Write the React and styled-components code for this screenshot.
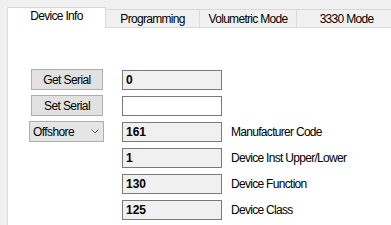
import React from 'react';
import styled, { createGlobalStyle } from 'styled-components';

const GlobalStyle = createGlobalStyle`
  html, body {
    margin: 0;
    padding: 0;
    background: #f0f0f0;
  }
  body {
    font-family: "Liberation Sans", Arial, sans-serif;
    color: #000;
  }
`;

const Window = styled.div`
  width: 391px;
  height: 225px;
  overflow: hidden;
  background: #f0f0f0;
  padding: 7px 0 0 7px;
  box-sizing: border-box;
  display: flex;
  flex-direction: column;
`;

const TabStrip = styled.div`
  display: flex;
  align-items: flex-end;
  height: 21px;
  flex-shrink: 0;
`;

const Tab = styled.div`
  box-sizing: border-box;
  width: ${({ $w }) => $w}px;
  flex-shrink: 0;
  font-size: 12px;
  letter-spacing: -0.7px;
  text-align: center;
  white-space: nowrap;
  border: 1px solid #d9d9d9;
  ${({ $active }) => ($active
    ? `
    height: 21px;
    background: #fff;
    border-bottom: none;
    line-height: 17px;
  `
    : `
    height: 19px;
    background: #f0f0f0;
    border-left: none;
    line-height: 17px;
    padding-top: 1px;
  `)}
`;

const Panel = styled.div`
  flex: 1;
  background: #fff;
  border-left: 1px solid #d9d9d9;
  padding: 41px 0 0 21px;
  display: flex;
  flex-direction: column;
  gap: 5px;
`;

const Row = styled.div`
  display: flex;
  align-items: flex-end;
  height: 21px;
`;

const LeftCell = styled.div`
  width: 75px;
  flex-shrink: 0;
  margin-right: 18px;
  display: flex;
  justify-content: flex-end;
  padding-right: 1px;
  box-sizing: border-box;
`;

const Button = styled.button`
  box-sizing: border-box;
  width: 72px;
  height: 21px;
  margin: 0;
  padding: 0;
  background: #e1e1e1;
  border: 1px solid #adadad;
  font-family: "Liberation Sans", Arial, sans-serif;
  font-size: 12px;
  letter-spacing: -0.6px;
  color: #000;
`;

const Combo = styled.div`
  box-sizing: border-box;
  width: 75px;
  height: 21px;
  margin-right: -1px;
  background: #e5e5e5;
  border: 1px solid #adadad;
  display: flex;
  align-items: center;
  justify-content: space-between;
  padding: 0 4px 0 3px;
  font-size: 12px;
  letter-spacing: -0.6px;
`;

const Field = styled.div`
  box-sizing: border-box;
  width: 100px;
  height: 20px;
  flex-shrink: 0;
  border: 1px solid #7a7a7a;
  background: ${({ $editable }) => ($editable ? '#fff' : '#f0f0f0')};
  font-size: 12px;
  font-weight: bold;
  line-height: 18px;
  padding-left: 3px;
`;

const Label = styled.span`
  margin-left: 9px;
  font-size: 12px;
  letter-spacing: -0.7px;
  line-height: 20px;
  white-space: nowrap;
`;

const Chevron = () => (
  <svg width="8" height="5" viewBox="0 0 8 5">
    <path d="M0.5 0.5 L4 4 L7.5 0.5" fill="none" stroke="#606060" strokeWidth="1" />
  </svg>
);

const rows = [
  { left: <Button>Get Serial</Button>, value: '0' },
  { left: <Button>Set Serial</Button>, value: '', editable: true },
  {
    left: (
      <Combo>
        <span>Offshore</span>
        <Chevron />
      </Combo>
    ),
    value: '161',
    label: 'Manufacturer Code',
  },
  { value: '1', label: 'Device Inst Upper/Lower' },
  { value: '130', label: 'Device Function' },
  { value: '125', label: 'Device Class' },
];

export default function App() {
  return (
    <Window>
      <GlobalStyle />
      <TabStrip>
        <Tab $active $w={99}>Device Info</Tab>
        <Tab $w={94}>Programming</Tab>
        <Tab $w={97}>Volumetric Mode</Tab>
        <Tab $w={100}>3330 Mode</Tab>
      </TabStrip>
      <Panel>
        {rows.map((r) => (
          <Row key={r.value + (r.label || '') + (r.editable ? 'e' : '')}>
            <LeftCell>{r.left}</LeftCell>
            <Field $editable={r.editable}>{r.value}</Field>
            {r.label && <Label>{r.label}</Label>}
          </Row>
        ))}
      </Panel>
    </Window>
  );
}
